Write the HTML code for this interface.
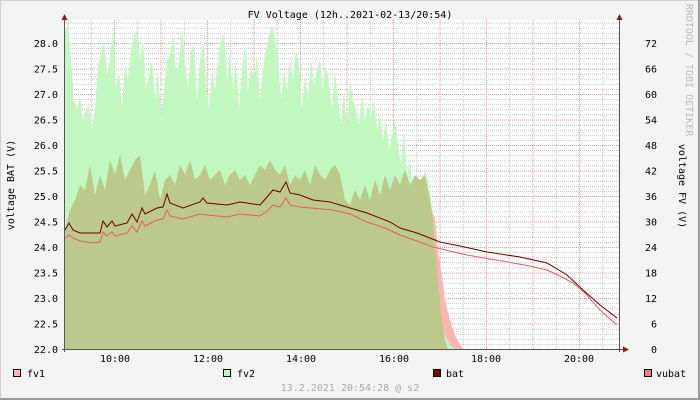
<!DOCTYPE html>
<html><head><meta charset="utf-8"><style>
html,body{margin:0;padding:0;background:#f3f3f3}
svg{display:block}
text{font-family:"DejaVu Sans Mono","Liberation Mono",monospace;font-size:10px;fill:#000}
</style></head><body>
<svg width="700" height="400" viewBox="0 0 700 400" xmlns="http://www.w3.org/2000/svg">
<defs>
<pattern id="hmin" x="0" y="349" width="10" height="5.1" patternUnits="userSpaceOnUse">
<line x1="0" y1="0.5" x2="10" y2="0.5" stroke="#c8c8c8" stroke-width="1" stroke-dasharray="1,1"/>
</pattern>
<pattern id="vmin" x="67.5" y="0" width="23.25" height="10" patternUnits="userSpaceOnUse">
<line x1="0.5" y1="0" x2="0.5" y2="10" stroke="#c8c8c8" stroke-width="1" stroke-dasharray="1,1"/>
</pattern>
<pattern id="hmaj" x="0" y="349" width="10" height="25.5" patternUnits="userSpaceOnUse">
<line x1="0" y1="0.5" x2="10" y2="0.5" stroke="#e8a0a0" stroke-width="1" stroke-dasharray="1,1"/>
</pattern>
<pattern id="vmaj" x="67.5" y="0" width="46.5" height="10" patternUnits="userSpaceOnUse">
<line x1="0.5" y1="0" x2="0.5" y2="10" stroke="#e8a0a0" stroke-width="1" stroke-dasharray="1,1"/>
</pattern>
</defs>
<rect x="0" y="0" width="700" height="400" fill="#f3f3f3"/>
<rect x="0.5" y="0.5" width="698" height="398" fill="none" stroke="#cfcfcf" stroke-width="1"/>
<rect x="698" y="0" width="2" height="400" fill="#9a9a9a"/>
<rect x="0" y="398" width="700" height="2" fill="#9a9a9a"/>
<rect x="65" y="20" width="555" height="329" fill="#fff"/>
<rect x="65" y="20" width="555" height="329" fill="url(#hmin)"/>
<rect x="65" y="20" width="555" height="329" fill="url(#vmin)"/>
<rect x="65" y="20" width="555" height="329" fill="url(#hmaj)"/>
<rect x="65" y="20" width="555" height="329" fill="url(#vmaj)"/>

<polygon fill="#ffb4b4" points="425,349 425,175 430,200 435,220 438,250 441,270 445,300 450,320 455,335 460,345 463,349"/>
<polygon fill="#c0f8c0" points="65,349 65,30 68,25 71,60 74,100 77,110 80,95 83,120 86,110 89,105 92,130 95,110 98,65 101,55 104,40 107,75 110,60 113,25 116,90 119,70 122,110 125,65 128,80 131,50 134,35 137,30 140,60 143,40 146,90 149,75 152,60 155,100 158,70 161,115 164,90 167,60 170,55 173,35 176,70 179,65 182,30 185,60 188,90 191,50 194,45 197,100 200,60 203,40 206,80 209,110 212,70 215,90 218,60 221,40 224,35 227,80 230,55 233,90 236,60 239,110 242,70 245,45 248,90 251,65 254,80 257,55 260,100 263,70 266,50 269,35 272,25 275,40 278,60 281,100 284,70 287,90 290,60 293,80 296,50 299,65 302,110 305,75 308,100 311,60 314,85 317,70 320,60 323,90 326,65 329,80 332,110 335,70 338,100 341,125 344,90 347,130 350,80 353,100 356,110 359,125 362,95 365,120 368,105 371,115 374,100 377,130 380,115 383,140 386,120 389,150 392,135 395,120 398,145 401,165 404,130 407,175 410,160 413,200 416,190 419,180 422,200 425,170 428,180 431,200 434,230 436,270 438,300 441,320 445,335 450,345 455,349"/>
<polygon fill="#bcc98a" points="65,349 65,230 70,210 75,200 80,185 85,190 90,165 95,195 100,175 105,190 110,160 115,175 120,155 125,180 130,170 135,160 140,155 145,195 150,185 155,170 160,200 165,180 170,175 175,185 180,165 185,175 190,160 195,180 200,175 205,165 210,180 215,175 220,170 225,185 230,175 235,170 240,180 245,175 250,185 255,175 260,165 265,170 270,160 275,170 280,175 285,165 290,185 295,175 300,180 305,170 310,185 315,165 320,175 325,180 330,170 335,165 340,175 345,200 350,205 355,190 360,200 365,185 370,200 375,180 380,195 385,175 390,190 395,175 400,185 405,170 410,185 415,175 420,180 425,175 430,200 433,220 436,260 439,290 442,320 445,340 448,349"/>

<polyline fill="none" stroke="#e06060" stroke-width="1" points="65,238 69,235 73,238 80,241 93,243 100,242 103,232 107,236 112,232 115,236 127,233 132,226 137,232 142,221 145,226 157,220 163,219 167,210 170,216 183,219 200,214 207,215 227,217 240,214 260,216 267,211 273,205 280,207 286,198 290,205 300,207 333,210 350,214 367,222 385,228 400,235 417,241 433,247 450,251 467,255 490,259 513,263 530,266 547,270 560,276 573,283 585,293 600,310 610,319 617,325"/>
<polyline fill="none" stroke="#6a0000" stroke-width="1" points="65,230 69,223 73,230 80,233 100,233 103,221 107,227 112,221 115,226 127,223 132,214 137,222 142,208 145,214 157,208 163,207 167,194 170,203 183,208 200,202 203,198 207,203 227,205 240,202 260,205 267,197 273,190 280,192 286,182 290,193 300,195 313,200 330,202 350,208 367,213 390,222 400,228 417,233 440,242 460,246 487,252 520,257 547,263 567,275 583,290 600,305 617,318"/>

<line x1="64.5" y1="18" x2="64.5" y2="352" stroke="#555" stroke-width="1"/>
<line x1="619.5" y1="18" x2="619.5" y2="352" stroke="#555" stroke-width="1"/>
<line x1="62" y1="349.5" x2="624" y2="349.5" stroke="#555" stroke-width="1"/>
<polygon points="61.5,20 67.5,20 64.5,14" fill="#8b1a1a"/>
<polygon points="616.5,20 622.5,20 619.5,14" fill="#8b1a1a"/>
<polygon points="623,346.5 623,352.5 629,349.5" fill="#8b1a1a"/>

<g text-anchor="end">
<text x="58" y="47">28.0</text><text x="58" y="72.5">27.5</text><text x="58" y="98">27.0</text><text x="58" y="123.5">26.5</text><text x="58" y="149">26.0</text><text x="58" y="174.5">25.5</text><text x="58" y="200">25.0</text><text x="58" y="225.5">24.5</text><text x="58" y="251">24.0</text><text x="58" y="276.5">23.5</text><text x="58" y="302">23.0</text><text x="58" y="327.5">22.5</text><text x="58" y="353">22.0</text>
<text x="657" y="47">72</text><text x="657" y="72.5">66</text><text x="657" y="98">60</text><text x="657" y="123.5">54</text><text x="657" y="149">48</text><text x="657" y="174.5">42</text><text x="657" y="200">36</text><text x="657" y="225.5">30</text><text x="657" y="251">24</text><text x="657" y="276.5">18</text><text x="657" y="302">12</text><text x="657" y="327.5">6</text><text x="657" y="353">0</text>
</g>
<g text-anchor="middle">
<text x="115" y="362">10:00</text><text x="208" y="362">12:00</text><text x="301" y="362">14:00</text><text x="394" y="362">16:00</text><text x="486" y="362">18:00</text><text x="579" y="362">20:00</text>
<text x="350" y="18">FV Voltage (12h..2021-02-13/20:54)</text>
<text x="350" y="391" style="fill:#aaa">13.2.2021 20:54:28 @ s2</text>
<text transform="translate(14,185) rotate(-90)">voltage BAT (V)</text>
<text transform="translate(679,186) rotate(90)">voltage FV (V)</text>
<text transform="translate(686,70) rotate(90)" style="fill:#bbb">RRDTOOL / TOBI OETIKER</text>
</g>

<rect x="13.5" y="369.5" width="7" height="7" fill="#ffb4b4" stroke="#000"/>
<text x="27" y="377">fv1</text>
<rect x="223.5" y="369.5" width="7" height="7" fill="#c0f8c0" stroke="#000"/>
<text x="237" y="377">fv2</text>
<rect x="433.5" y="369.5" width="7" height="7" fill="#7a0000" stroke="#000"/>
<text x="446" y="377">bat</text>
<rect x="644.5" y="369.5" width="7" height="7" fill="#f08080" stroke="#000"/>
<text x="656" y="377">vubat</text>
</svg>
</body></html>
